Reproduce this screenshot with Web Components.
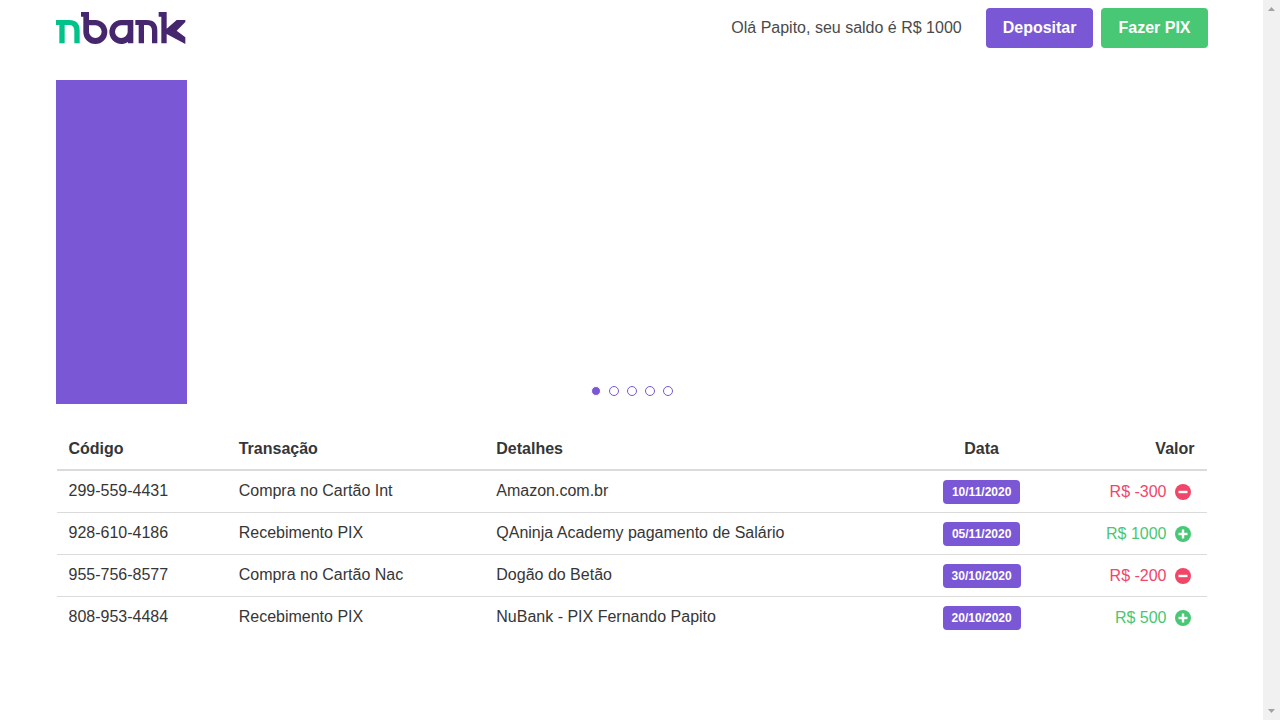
<!DOCTYPE html>
<html lang="pt-BR">
<head>
<meta charset="utf-8">
<title>nbank</title>
<style>
  html, body { margin: 0; }
  body {
    font: 16px/24px "Liberation Sans", Arial, sans-serif;
    color: #4a4a4a;
    background: #fff;
    --purple: #7957d5;
    --green: #48c774;
    --red: #f14668;
  }
</style>
</head>
<body>
<nb-page>
  <nb-header>
    <nb-logo slot="brand"></nb-logo>
    <span slot="greeting">Olá Papito, seu saldo é R$ 1000</span>
    <nb-button slot="actions">Depositar</nb-button>
    <nb-button slot="actions" kind="success">Fazer PIX</nb-button>
  </nb-header>
  <nb-carousel></nb-carousel>
  <nb-transactions></nb-transactions>
</nb-page>

<script>
class Base extends HTMLElement {
  constructor() {
    super();
    this.attachShadow({ mode: 'open' }).innerHTML = this.constructor.html;
  }
}

customElements.define('nb-scrollbar', class extends Base {
  static html = `
    <style>
      :host { display: flex; flex-direction: column; justify-content: space-between; align-items: center; background: #f1f1f1; }
      svg { display: block; width: 17px; height: 17px; fill: #a3a3a3; }
    </style>
    <svg viewBox="0 0 17 17"><path d="M5 11h7L8.500 7z"/></svg>
    <svg viewBox="0 0 17 17"><path d="M5 6h7L8.500 10z"/></svg>`;
});

customElements.define('nb-page', class extends Base {
  static html = `
    <style>
      :host { display: grid; grid-template-columns: minmax(0, 1fr) 17px; min-height: 100vh; }
      main { box-sizing: border-box; width: 100%; max-width: 1152px; margin: 0 auto; }
    </style>
    <main><slot></slot></main>
    <nb-scrollbar aria-hidden="true"></nb-scrollbar>`;
});

customElements.define('nb-header', class extends Base {
  static html = `
    <style>
      :host { display: block; }
      header { display: flex; align-items: center; justify-content: space-between; padding: 8px 0; }
      .end { display: flex; align-items: center; gap: 24px; }
      .actions { display: flex; gap: 8px; }
    </style>
    <header>
      <slot name="brand"></slot>
      <div class="end">
        <slot name="greeting"></slot>
        <div class="actions"><slot name="actions"></slot></div>
      </div>
    </header>`;
});

customElements.define('nb-logo', class extends Base {
  static html = `
    <style>
      :host { display: block; }
      svg { display: block; width: 130px; height: 32px; }
    </style>
    <svg viewBox="0 0 390 96" role="img" aria-label="nbank">
      <path fill="#00c389" d="M0 24H40Q71 24 71 56V94H55V56Q55 39 39 39H26V94H10V39H0Z"/>
      <g fill="#46266c">
        <path fill-rule="evenodd" d="M75 0H99V24H118A36 36 0 1 1 82 60V14H75ZM99 40V60A19 19 0 1 0 118 40Z"/>
        <path fill-rule="evenodd" d="M196 24H232V94H216V90A36 36 0 1 1 196 24ZM196 40A19 19 0 1 0 215 60V40Z"/>
        <path d="M238 24H273Q304 24 304 56V94H288V56Q288 39 272 39H264V94H248V39H238Z"/>
        <path d="M308 0H332V50L362 24H388V30L362 56L388 76V96L332 66V94H316V14H308Z"/>
      </g>
    </svg>`;
});

customElements.define('nb-button', class extends Base {
  static html = `
    <style>
      :host { display: block; }
      button {
        display: block; box-sizing: border-box; height: 40px; padding: 0 17px;
        border: 0; border-radius: 4px; background: var(--purple); color: #fff;
        font: inherit; font-weight: 700; white-space: nowrap; cursor: pointer;
      }
      :host([kind="success"]) button { background: var(--green); }
    </style>
    <button type="button"><slot></slot></button>`;
});

customElements.define('nb-carousel', class extends Base {
  static html = `
    <style>
      :host { display: block; position: relative; margin: 24px 0; }
      .slide { width: 131px; height: 324px; background: var(--purple); }
      .dots { position: absolute; left: 0; right: 0; bottom: 8px; display: flex; justify-content: center; gap: 8px; }
      button {
        box-sizing: border-box; width: 10px; height: 10px; padding: 0;
        border: 1px solid var(--purple); border-radius: 50%; background: #fff; cursor: pointer;
      }
      button[aria-current] { border-color: #fff; background: var(--purple); }
    </style>
    <div class="slide"></div>
    <div class="dots">
      <button type="button" aria-label="1" aria-current="true"></button>
      <button type="button" aria-label="2"></button>
      <button type="button" aria-label="3"></button>
      <button type="button" aria-label="4"></button>
      <button type="button" aria-label="5"></button>
    </div>`;
});

customElements.define('nb-tag', class extends Base {
  static html = `
    <style>
      :host {
        display: inline-flex; align-items: center; height: 24px; padding: 0 9px;
        border-radius: 4px; background: var(--purple); color: #fff;
        font-size: 12px; font-weight: 700; line-height: 24px; white-space: nowrap; vertical-align: top;
      }
    </style>
    <slot></slot>`;
});

customElements.define('nb-amount', class extends Base {
  static html = `
    <style>
      :host { display: inline-flex; align-items: center; gap: 4px; color: var(--green); white-space: nowrap; vertical-align: top; }
      :host([kind="debit"]) { color: var(--red); }
      svg { display: block; width: 24px; height: 24px; fill: currentColor; }
      .v { stroke: #fff; stroke-width: 2.4; fill: none; }
      :host([kind="debit"]) .plus { display: none; }
    </style>
    <slot></slot>
    <svg viewBox="0 0 24 24" aria-hidden="true">
      <circle cx="12" cy="12" r="8"/><path class="v" d="M7.500 12h9"/><path class="v plus" d="M12 7.500v9"/>
    </svg>`;
});

customElements.define('nb-transactions', class extends Base {
  static html = `
    <style>
      :host { display: block; padding: 1px; color: #363636; }
      table { width: 100%; border-collapse: collapse; table-layout: fixed; }
      th, td { padding: 8px 12px; text-align: left; vertical-align: top; border-bottom: 1px solid #dbdbdb; }
      th { border-bottom-width: 2px; }
      td { box-sizing: border-box; height: 42px; }
      tbody tr:last-child td { border-bottom: 0; }
      .date { text-align: center; }
      .value { text-align: right; }
      td.date, td.value { padding-top: 9px; padding-bottom: 7px; }
      .c1 { width: 14.8%; } .c2 { width: 22.4%; } .c3 { width: 36.4%; } .c4 { width: 13.7%; }
    </style>
    <table>
      <colgroup><col class="c1"><col class="c2"><col class="c3"><col class="c4"><col></colgroup>
      <thead><tr>
        <th scope="col">Código</th><th scope="col">Transação</th><th scope="col">Detalhes</th>
        <th scope="col" class="date">Data</th><th scope="col" class="value">Valor</th>
      </tr></thead>
      <tbody>
        <tr><td>299-559-4431</td><td>Compra no Cartão Int</td><td>Amazon.com.br</td>
          <td class="date"><nb-tag>10/11/2020</nb-tag></td><td class="value"><nb-amount kind="debit">R$ -300</nb-amount></td></tr>
        <tr><td>928-610-4186</td><td>Recebimento PIX</td><td>QAninja Academy pagamento de Salário</td>
          <td class="date"><nb-tag>05/11/2020</nb-tag></td><td class="value"><nb-amount>R$ 1000</nb-amount></td></tr>
        <tr><td>955-756-8577</td><td>Compra no Cartão Nac</td><td>Dogão do Betão</td>
          <td class="date"><nb-tag>30/10/2020</nb-tag></td><td class="value"><nb-amount kind="debit">R$ -200</nb-amount></td></tr>
        <tr><td>808-953-4484</td><td>Recebimento PIX</td><td>NuBank - PIX Fernando Papito</td>
          <td class="date"><nb-tag>20/10/2020</nb-tag></td><td class="value"><nb-amount>R$ 500</nb-amount></td></tr>
      </tbody>
    </table>`;
});
</script>
</body>
</html>
